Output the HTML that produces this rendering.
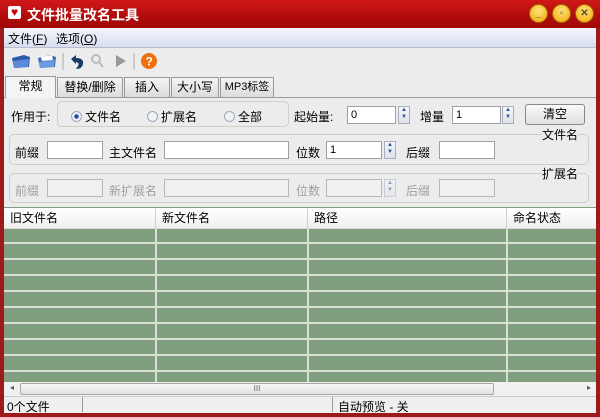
<!DOCTYPE html>
<html><head><meta charset="utf-8"><style>
*{margin:0;padding:0;box-sizing:border-box}
body{width:600px;height:417px;position:relative;overflow:hidden;background:#9c1a1a;font-family:"Liberation Sans","Noto Sans CJK SC",sans-serif;font-size:12px;color:#000}
.a{position:absolute}
.title{left:0;top:0;width:600px;height:28px;background:linear-gradient(#d01818,#b00c0c 60%,#a00808);}
.client{left:4px;top:28px;width:592px;height:385px;background:#ececec}
.menu{left:0;top:0;width:592px;height:20px;background:linear-gradient(#f4f6fb,#d8def0);border-bottom:1px solid #b8bccc}
.inp{background:#fff;border:1px solid #a0a0a0;height:18px;padding-left:3px;font-size:11px;line-height:16px}
.dis{background:#f0f0f0;border-color:#b8b8b8}
.spin{width:12px;height:18px;border:1px solid #a8b0c0;background:linear-gradient(#f4f6fa,#dde2ea);font-size:6px;line-height:7px;text-align:center;color:#2a4a9a}
.tab{top:49px;height:20px;border:1px solid #9a9a9a;border-bottom:none;background:linear-gradient(#f4f4f4,#dcdcdc);text-align:center;line-height:19px;font-size:12px}
.grp{border:1px solid #cfcfc4;border-radius:5px}
.gray{color:#a0a0a0}
.rb{display:inline-block;width:11px;height:11px;border-radius:50%;border:1px solid #a0a8b8;background:#f0f2f6;vertical-align:-1px;margin-right:3px}
.hdr{top:180px;height:21px;background:linear-gradient(#fff,#f0f0f0);border-bottom:1px solid #d8d8d8;line-height:20px;padding-left:6px}
.btn{border-radius:50%;width:19px;height:19px;top:4px;background:radial-gradient(circle at 50% 35%,#ffe27a,#f0a800);border:1px solid #a06000;font-size:10px;text-align:center;line-height:17px;font-weight:bold;color:#552}
</style></head><body>
<div class="a title"></div>
<div class="a" style="left:8px;top:6px;width:13px;height:13px;background:#fff;border-radius:2px;color:#c00;font-size:12px;line-height:13px;text-align:center">♥</div>
<div class="a" style="left:27px;top:5px;color:#fff;font-weight:bold;font-size:14px">文件批量改名工具</div>
<div class="a btn" style="left:529px">_</div>
<div class="a btn" style="left:552px">▫</div>
<div class="a btn" style="left:575px">✕</div>
<div class="a client">
 <div class="a menu"><span class="a" style="left:4px;top:2px">文件(<u>F</u>)</span><span class="a" style="left:52px;top:2px">选项(<u>O</u>)</span></div>
 <svg class="a" style="left:4px;top:22px" width="150" height="22">
  <path d="M4 8 L16 5 L22 7 L21 17 L6 18 Z" fill="#2a5aa8"/><path d="M5 11 L21 9 L20 17 L6 18Z" fill="#5a8ad8"/>
  <path d="M30 8 L42 5 L48 7 L47 17 L32 18 Z" fill="#3a6ab8"/><path d="M33 7 L44 5 L45 10 L34 11Z" fill="#fff"/><path d="M31 12 L47 10 L46 17 L32 18Z" fill="#6a9ae0"/>
  <line x1="55" y1="3" x2="55" y2="20" stroke="#aaa"/>
  <path d="M63 9 L68 5 L68 8 Q76 8 75 14 Q74 19 68 19 L70 16 Q72 13 68 12 L68 14 Z" fill="#1a3a6a"/>
  <circle cx="88" cy="9" r="4" fill="none" stroke="#bbb" stroke-width="2"/><line x1="91" y1="12" x2="95" y2="17" stroke="#bbb" stroke-width="2"/>
  <path d="M108 5 L118 11 L108 17 Z" fill="#999"/>
  <line x1="126" y1="3" x2="126" y2="20" stroke="#aaa"/>
  <circle cx="141" cy="11" r="8" fill="#ee7010"/><text x="137.5" y="15.5" fill="#fff" font-size="12" font-weight="bold" font-family="Liberation Sans">?</text>
 </svg>
 <div class="a" style="left:0;top:69px;width:592px;height:1px;background:#9a9a9a"></div>
 <div class="a tab" style="left:1px;width:51px;background:#f4f4f4;height:22px;top:48px;border-bottom:none">常规</div>
 <div class="a tab" style="left:53px;width:66px">替换/删除</div>
 <div class="a tab" style="left:120px;width:46px">插入</div>
 <div class="a tab" style="left:167px;width:48px">大小写</div>
 <div class="a tab" style="left:216px;width:54px;font-size:11px">MP3标签</div>
 <span class="a" style="left:7px;top:80px">作用于:</span>
 <div class="a grp" style="left:53px;top:73px;width:232px;height:26px"></div>
 <span class="a" style="left:67px;top:80px"><span class="rb" style="background:radial-gradient(#2a4a9a 30%,#eef 40%)"></span>文件名</span>
 <span class="a" style="left:143px;top:80px"><span class="rb"></span>扩展名</span>
 <span class="a" style="left:220px;top:80px"><span class="rb"></span>全部</span>
 <span class="a" style="left:290px;top:80px">起始量:</span>
 <div class="a inp" style="left:343px;top:78px;width:49px">0</div><div class="a spin" style="left:394px;top:78px">▲<br>▼</div>
 <span class="a" style="left:416px;top:80px">增量</span>
 <div class="a inp" style="left:448px;top:78px;width:49px">1</div><div class="a spin" style="left:498px;top:78px">▲<br>▼</div>
 <div class="a" style="left:521px;top:76px;width:60px;height:21px;border:1px solid #888;border-radius:3px;background:linear-gradient(#fafafa,#e0e0e0);text-align:center;line-height:19px">清空</div>
 <div class="a grp" style="left:5px;top:106px;width:580px;height:31px"></div>
 <span class="a" style="left:538px;top:98px;background:#ececec">文件名</span>
 <span class="a" style="left:11px;top:116px">前缀</span><div class="a inp" style="left:43px;top:113px;width:56px"></div>
 <span class="a" style="left:105px;top:116px">主文件名</span><div class="a inp" style="left:160px;top:113px;width:125px"></div>
 <span class="a" style="left:292px;top:116px">位数</span><div class="a inp" style="left:322px;top:113px;width:56px">1</div><div class="a spin" style="left:380px;top:113px">▲<br>▼</div>
 <span class="a" style="left:402px;top:116px">后缀</span><div class="a inp" style="left:435px;top:113px;width:56px"></div>
 <div class="a grp" style="left:5px;top:145px;width:580px;height:30px"></div>
 <span class="a" style="left:538px;top:137px;background:#ececec">扩展名</span>
 <span class="a gray" style="left:11px;top:154px">前缀</span><div class="a inp dis" style="left:43px;top:151px;width:56px"></div>
 <span class="a gray" style="left:105px;top:154px">新扩展名</span><div class="a inp dis" style="left:160px;top:151px;width:125px"></div>
 <span class="a gray" style="left:292px;top:154px">位数</span><div class="a inp dis" style="left:322px;top:151px;width:56px"></div><div class="a spin" style="left:380px;top:151px;opacity:.5">▲<br>▼</div>
 <span class="a gray" style="left:402px;top:154px">后缀</span><div class="a inp dis" style="left:435px;top:151px;width:56px"></div>
 <div class="a" style="left:0;top:179px;width:592px;height:175px;background:#7f9f7f;background-image:repeating-linear-gradient(#7f9f7f 0 14px,#d8e0d8 14px 16px);background-position:0 21px"></div>
 <div class="a hdr" style="left:0;width:152px;border-right:1px solid #d0d0d0">旧文件名</div>
 <div class="a hdr" style="left:152px;width:152px;border-right:1px solid #d0d0d0">新文件名</div>
 <div class="a hdr" style="left:304px;width:199px;border-right:1px solid #d0d0d0">路径</div>
 <div class="a hdr" style="left:503px;width:89px">命名状态</div>
 <div class="a" style="left:151px;top:201px;width:2px;height:153px;background:#d8e0d8"></div>
 <div class="a" style="left:303px;top:201px;width:2px;height:153px;background:#d8e0d8"></div>
 <div class="a" style="left:502px;top:201px;width:2px;height:153px;background:#d8e0d8"></div>
 <div class="a" style="left:0;top:354px;width:592px;height:14px;background:#f0f0f0"></div>
 <div class="a" style="left:16px;top:355px;width:474px;height:12px;border:1px solid #a8a8a8;border-radius:2px;background:linear-gradient(#f8f8f8,#e0e0e0);text-align:center;font-size:8px;line-height:10px;color:#666">III</div>
 <span class="a" style="left:6px;top:355px;font-size:8px;color:#555">◂</span><span class="a" style="left:583px;top:355px;font-size:8px;color:#555">▸</span>
 <div class="a" style="left:0;top:368px;width:592px;height:17px;background:#f0eeee;border-top:1px solid #ccc"></div>
 <span class="a" style="left:3px;top:370px">0个文件</span>
 <div class="a" style="left:78px;top:369px;width:1px;height:15px;background:#999"></div>
 <div class="a" style="left:328px;top:369px;width:1px;height:15px;background:#999"></div>
 <span class="a" style="left:334px;top:370px">自动预览 - 关</span>
</div>
</body></html>
